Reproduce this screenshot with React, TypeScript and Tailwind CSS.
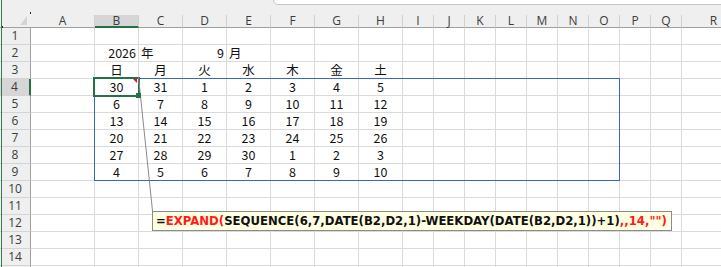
import React from "react";

const COLS = ["A","B","C","D","E","F","G","H","I","J","K","L","M","N","O","P","Q","R"];
const DAYS = ["日","月","火","水","木","金","土"];
const CAL = [
  ["30","31","1","2","3","4","5"],
  ["6","7","8","9","10","11","12"],
  ["13","14","15","16","17","18","19"],
  ["20","21","22","23","24","25","26"],
  ["27","28","29","30","1","2","3"],
  ["4","5","6","7","8","9","10"],
];

type Cell = { text: string; align: "l" | "r" | "c" } | null;

function getCell(row: number, col: number): Cell {
  if (row === 2) {
    if (col === 1) return { text: "2026", align: "r" };
    if (col === 2) return { text: "年", align: "l" };
    if (col === 3) return { text: "9", align: "r" };
    if (col === 4) return { text: "月", align: "l" };
  }
  if (row === 3 && col >= 1 && col <= 7) return { text: DAYS[col - 1], align: "c" };
  if (row >= 4 && row <= 9 && col >= 1 && col <= 7) return { text: CAL[row - 4][col - 1], align: "c" };
  return null;
}

export default function App() {
  const rows = Array.from({ length: 15 }, (_, i) => i + 1);
  return (
    <div className="relative w-[721px] h-[267px] overflow-hidden bg-white">
      {/* top strip with formula bar edge */}
      <div className="relative h-[15px] bg-[#efefef]">
        <div className="absolute left-[273px] top-[-12px] w-[500px] h-[17px] rounded-[5px] border border-[#c6c6c6] bg-white" />
      </div>

      <div className="grid grid-cols-[31px_64px_repeat(7,44px)_repeat(9,31px)_64px] font-['Noto_Sans_CJK_JP',sans-serif]">
        {/* header row */}
        <div className="relative h-[13px] bg-[#efefef] border-b border-b-[#a0a0a0]">
          <div className="absolute left-[20px] top-[1px] w-[7px] h-[9px] bg-[#d4d4d4] [clip-path:polygon(100%_0,100%_100%,0_100%)]" />
        </div>
        {COLS.map((c, i) => (
          <div
            key={c}
            className={
              "h-[13px] flex items-start justify-center font-['Open_Sans',sans-serif] text-[12px] leading-[11px] text-[#3c3c3c] border-r border-r-[#d0d0d0] " +
              (i === 1 ? "bg-[#d6d6d6] border-b-2 border-b-[#217346]" : "bg-[#efefef] border-b border-b-[#a0a0a0]")
            }
          >
            {c}
          </div>
        ))}

        {rows.map((r) => (
          <React.Fragment key={r}>
            <div
              className={
                "h-[17px] flex items-center justify-center font-['Open_Sans',sans-serif] text-[12px] leading-[16px] text-[#3c3c3c] border-b border-b-[#d4d4d4] " +
                (r === 4 ? "bg-[#d6d6d6] border-r-2 border-r-[#217346]" : "bg-[#efefef] border-r border-r-[#a0a0a0]")
              }
            >
              {r <= 14 ? r : ""}
            </div>
            {COLS.map((c, ci) => {
              const cell = getCell(r, ci);
              return (
                <div
                  key={c}
                  className={
                    "h-[17px] border-r border-b border-[#dadada] text-[12.5px] leading-[15px] text-[#111] whitespace-nowrap overflow-visible px-[2px] flex " +
                    (cell?.align === "r" ? "justify-end" : cell?.align === "l" ? "justify-start" : "justify-center")
                  }
                >
                  {cell ? cell.text : ""}
                </div>
              );
            })}
          </React.Fragment>
        ))}
      </div>

      {/* left window edge */}
      <div className="absolute left-[1px] top-0 w-[1px] h-full bg-[#3a7a50]" />
      <div className="absolute left-[30px] top-[12px] w-[1px] h-[2px] bg-[#222]" />
      <div className="absolute left-[2px] top-[26px] w-[1px] h-[2px] bg-[#222]" />

      {/* spill border */}
      <div className="absolute left-[94px] top-[78px] w-[526px] h-[103px] border border-[#3567c8]" />

      {/* selection */}
      <div className="absolute left-[93px] top-[77px] w-[47px] h-[20px] border-2 border-[#217346]" />
      <div className="absolute left-[133px] top-[79px] w-[4px] h-[4px] bg-[#e81123] [clip-path:polygon(0_0,100%_0,100%_100%)]" />

      {/* connector */}
      <svg className="absolute left-0 top-0 pointer-events-none" width="721" height="267">
        <line x1="138.5" y1="77" x2="152.5" y2="211" stroke="#8a8a8a" strokeWidth="1" />
      </svg>
      <div className="absolute left-[136px] top-[93px] w-[5px] h-[5px] bg-[#217346]" />

      {/* comment */}
      <div className="absolute left-[152px] top-[211px] w-[520px] h-[20px] border border-[#8b8b8b] bg-[#ffffe1] pl-[3px] font-['DejaVu_Sans',sans-serif] font-bold text-[11.7px] leading-[18px] whitespace-nowrap text-[#111]">
        <span>=</span>
        <span className="text-[#ff1a1a]">EXPAND(</span>
        <span>SEQUENCE(6,7,DATE(B2,D2,1)-WEEKDAY(DATE(B2,D2,1))+1)</span>
        <span className="text-[#ff1a1a]">,,14,"")</span>
      </div>
    </div>
  );
}
